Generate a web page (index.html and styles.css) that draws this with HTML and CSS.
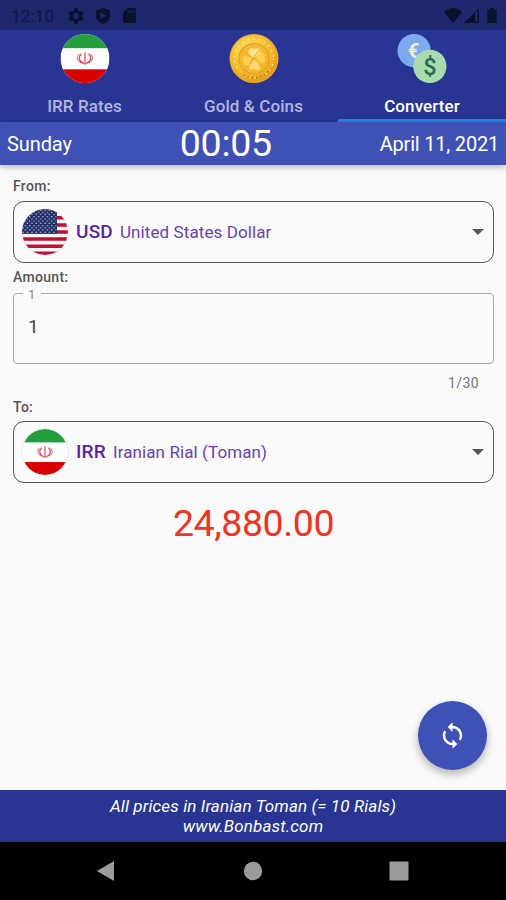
FILE: index.html
```html
<!DOCTYPE html>
<html lang="en">
<head>
<meta charset="utf-8">
<title>Currency Converter</title>
<link rel="stylesheet" href="styles.css">
</head>
<body>
<svg class="defs" width="0" height="0" aria-hidden="true">
  <defs>
    <clipPath id="round"><circle cx="24" cy="24" r="24"/></clipPath>
    <pattern id="stars" width="4.6" height="4.6" patternUnits="userSpaceOnUse">
      <circle cx="1.15" cy="1.15" r=".8" fill="#c9d0e8"/><circle cx="3.45" cy="3.45" r=".8" fill="#c9d0e8"/>
    </pattern>
    <radialGradient id="gold" cx=".4" cy=".35" r=".7"><stop offset="0" stop-color="#ffe36a"/><stop offset=".6" stop-color="#f6bd28"/><stop offset="1" stop-color="#e09a1a"/></radialGradient>
    <symbol id="iran" viewBox="0 0 48 48">
      <g clip-path="url(#round)">
        <path fill="#fff" d="M0 0h48v48H0z"/><path fill="#249f40" d="M0 0h48v14H0z"/><path fill="#da0000" d="M0 34.500h48V48H0z"/>
        <path d="M0 14.500h48M0 34h48" stroke="#fff" stroke-width="1" stroke-dasharray="1.200 1" opacity=".65"/>
        <g fill="none" stroke="#e0454b" stroke-width="1.200">
          <path d="M24 18v12M20.500 19.500c-3.200 3-2.700 7.600 2.500 9.500M27.500 19.500c3.200 3 2.700 7.600-2.500 9.500"/>
          <path d="M18.500 19.500c-3.200 3-2.300 7 1.800 8.800M29.500 19.500c3.200 3 2.300 7-1.800 8.800" stroke-width=".9"/>
        </g>
      </g>
    </symbol>
  </defs>
</svg>
<div class="screen">
  <div class="status">
    <span class="clock">12:10</span>
    <svg class="gear" viewBox="2 2 20 20"><path d="M19.140 12.940c.04-.3.06-.61.06-.94s-.02-.64-.07-.94l2.030-1.580a.49.49 0 0 0 .12-.61l-1.920-3.320a.49.49 0 0 0-.59-.22l-2.390.96a7 7 0 0 0-1.620-.94l-.36-2.540A.48.48 0 0 0 13.920 2.400h-3.840a.48.48 0 0 0-.47.41l-.36 2.540a7 7 0 0 0-1.620.94l-2.390-.96a.49.49 0 0 0-.59.22L2.740 8.870a.49.49 0 0 0 .12.61l2.030 1.580a6.300 6.300 0 0 0 0 1.880l-2.030 1.580a.49.49 0 0 0-.12.61l1.920 3.320c.12.22.37.29.59.22l2.390-.96c.5.38 1.030.7 1.620.94l.36 2.540c.05.24.24.41.48.41h3.840c.24 0 .44-.17.47-.41l.36-2.540a7 7 0 0 0 1.620-.94l2.390.96c.22.08.47 0 .59-.22l1.920-3.320a.49.49 0 0 0-.12-.61zM12 15.600a3.600 3.600 0 1 1 0-7.200 3.600 3.600 0 0 1 0 7.200z"/></svg>
    <svg class="shield" viewBox="0 0 16 16"><path fill-rule="evenodd" d="M8 0l7 2.500v5c0 4-3 7-7 8.500-4-1.500-7-4.500-7-8.500v-5zM5.500 4.300v7l6-3.500z"/></svg>
    <svg class="card" viewBox="0 0 14 16"><path fill-rule="evenodd" d="M5 0h7.500Q14 0 14 1.500v13q0 1.500-1.500 1.500h-11Q0 16 0 14.500V5zM5 2.500V5h1.300V2.500zM8 2.500V5h1.300V2.500zM11 2.500V5h1.300V2.500z"/></svg>
    <div class="signals">
      <svg class="wifi" viewBox="0 0 18 15"><path d="M0 4Q9-4 18 4L9 15z"/></svg>
      <svg class="cell" viewBox="0 0 15 15"><path fill-rule="evenodd" d="M0 15L15 0v15zM11 5.500v8h2.500V3z"/></svg>
      <svg class="battery" viewBox="0 0 10 16"><path d="M3 0h4v1.500h3V16H0V1.500h3z"/></svg>
    </div>
  </div>
  <nav class="tabs">
    <div class="tab"><svg class="tab-icon"><use href="#iran"/></svg><span>IRR Rates</span></div>
    <div class="tab">
      <svg class="tab-icon" viewBox="0 0 48 48">
        <circle cx="24" cy="24" r="24" fill="#e8a930"/><circle cx="24" cy="24" r="23" fill="url(#gold)"/>
        <circle cx="24" cy="24" r="19" fill="none" stroke="#ffe9a0" stroke-width="1.400" stroke-dasharray="1.500 4"/>
        <path d="M14 40A19 19 0 0 0 40 34" fill="none" stroke="#b87512" stroke-width="1.500" stroke-dasharray="1.500 2.600"/>
        <circle cx="24" cy="24" r="14.800" fill="#f3b730" stroke="#e0a024" stroke-width="1"/>
        <g fill="#ffd052"><path d="M23 23q-8-6-2-9 2-1 3 1 3-2 5 0 4 4-5 8z" fill="#ffe48e"/><path d="M22 24q-7-5-9-1-1 3 1 3-1 4 2 5 5 0 6-7z"/><path d="M26 23q4-7 8-4 2 2 0 4 3 3 0 5-4 2-8-5z"/><path d="M24 25q-6 6-4 9 2 2 4 0 3 3 6 0 1-4-6-9z" fill="#ffda70"/></g>
        <path d="M29 16q-5 5-9 14" fill="none" stroke="#d39a28" stroke-width=".9"/>
      </svg><span>Gold &amp; Coins</span></div>
    <div class="tab active">
      <svg class="tab-icon" viewBox="0 0 48 48">
        <circle cx="16.300" cy="16.300" r="16.300" fill="#7baaf0"/><text class="euro" x="15.800" y="23.500">€</text>
        <circle cx="31.700" cy="31.700" r="16.300" fill="#a8dbae"/><text class="dollar" x="31.700" y="40">$</text>
      </svg><span>Converter</span></div>
  </nav>
  <header class="datebar"><span class="day">Sunday</span><span class="time">00:05</span><span class="date">April 11, 2021</span></header>
  <main class="form">
    <div class="label">From:</div>
    <div class="select">
      <svg class="flag" viewBox="0 0 48 48"><g clip-path="url(#round)">
        <path fill="#f8f7f8" d="M0 0h48v48H0z"/>
        <path stroke="#bd1235" stroke-width="3.690" d="M0 1.850h48M0 9.230h48M0 16.610h48M0 24h48M0 31.380h48M0 38.770h48M0 46.150h48"/>
        <path fill="#202b66" d="M0 0h36.500v25.800H0z"/><path fill="url(#stars)" d="M0 0h36v25.500H0z"/></g></svg>
      <span class="code">USD</span><span class="name usd">United States Dollar</span><i class="arrow"></i>
    </div>
    <div class="label amount-label">Amount:</div>
    <fieldset class="amount"><legend>1</legend><span>1</span></fieldset>
    <div class="counter">1/30</div>
    <div class="label">To:</div>
    <div class="select">
      <svg class="flag"><use href="#iran"/></svg>
      <span class="code">IRR</span><span class="name irr">Iranian Rial (Toman)</span><i class="arrow"></i>
    </div>
    <div class="result">24,880.00</div>
    <div class="fab"><svg viewBox="0 0 24 24"><path d="M12 4V1L8 5l4 4V6c3.310 0 6 2.690 6 6 0 1.010-.25 1.970-.7 2.800l1.460 1.460A7.930 7.930 0 0 0 20 12c0-4.420-3.580-8-8-8zm0 14c-3.310 0-6-2.690-6-6 0-1.010.25-1.970.7-2.800L5.240 7.740A7.930 7.930 0 0 0 4 12c0 4.420 3.580 8 8 8v3l4-4-4-4z"/></svg></div>
  </main>
  <footer class="note"><div class="line-one">All prices in Iranian Toman (= 10 Rials)</div><div class="line-two">www.Bonbast.com</div></footer>
  <div class="navbar">
    <svg viewBox="0 0 20 22"><path d="M18 1v20L1 11z"/></svg>
    <svg viewBox="0 0 20 22"><circle cx="10" cy="11" r="9.200"/></svg>
    <svg viewBox="0 0 20 22"><rect x=".5" y="1.500" width="19" height="19" rx="1"/></svg>
  </div>
</div>
</body>
</html>
```
FILE: styles.css
```css
* { box-sizing: border-box; }
body { margin: 0; font-family: Roboto, "Liberation Sans", sans-serif; background: #fafafa; }
.defs { position: absolute; }
svg { display: block; flex: none; }
.screen { width: 506px; height: 900px; display: flex; flex-direction: column; overflow: hidden; }

.status { height: 30px; flex: none; background: #1f286d; display: flex; align-items: center; padding: 1px 9px 0 11px; color: #10163f; fill: #0b102d; }
.clock { font-size: 17px; width: 57px; letter-spacing: .2px; }
.gear { width: 16px; height: 16px; }
.shield { width: 16px; height: 16px; margin-left: 11px; }
.card { width: 13px; height: 15px; margin-left: 12px; }
.signals { display: flex; align-items: center; margin-left: auto; }
.wifi { width: 18px; height: 15px; }
.cell { width: 15px; height: 15px; margin-left: 2px; }
.battery { width: 10px; height: 15px; margin: 0 0 0 8px; }

.tabs { height: 92px; flex: none; display: grid; grid-template-columns: 169px 169px 168px; background: #283593; }
.tab { display: flex; flex-direction: column; align-items: center; padding-top: 4px; font-size: 17px; font-weight: 500; line-height: 20px; color: #b0b6e0; border-bottom: 3px solid transparent; }
.tab span { margin-top: 13px; letter-spacing: .1px; }
.tab.active { color: #fff; border-color: #1e88e5; }
.tab-icon { width: 50px; height: 49px; }
.euro, .dollar { font-family: Roboto, sans-serif; text-anchor: middle; }
.euro { font-size: 20px; font-weight: 700; fill: #f5eac8; }
.dollar { font-size: 23px; font-weight: 500; fill: #276b52; }

.datebar { height: 43px; flex: none; display: flex; justify-content: space-between; align-items: center; padding: 0 7px; background: #3f51b5; color: #fff; font-size: 20px; box-shadow: 0 2px 6px rgba(0,0,0,.28); z-index: 1; }
.day { letter-spacing: -.1px; }
.time { font-size: 37.500px; line-height: 43px; letter-spacing: -.3px; }
.date { letter-spacing: -.2px; }

.form { flex: 1; position: relative; padding: 12px 12px 0 13px; }
.label { font-size: 14px; line-height: 18px; font-weight: 500; color: #555; letter-spacing: .3px; }
.amount-label { margin-top: -1px; }
.select { height: 62px; margin: 6px 0; border: 1px solid #555; border-radius: 11px; display: flex; align-items: center; padding: 0 9px 1px 8px; }
.flag { width: 46px; height: 46px; border-radius: 50%; box-shadow: 0 0 1px #999; }
.code { font-size: 19px; font-weight: 500; color: #5b1fa8; margin-left: 8px; letter-spacing: .2px; }
.name { font-size: 17px; color: #6a3fb8; margin-left: 7px; letter-spacing: .1px; }
.arrow { margin-left: auto; border: 6px solid transparent; border-top-color: #555; border-bottom: 0; }
.amount { height: 79px; margin: -1px 0 0; border: 1px solid #aaa; border-radius: 4px; padding: 0 0 0 14px; font-size: 19px; color: #444; min-width: 0; }
.amount legend { font-size: 13px; line-height: 12px; height: 16px; padding: 4px 6px 0 5px; margin-left: -5px; color: #888; }
.amount span { display: block; line-height: 22px; margin-top: 15px; }
.counter { height: 34px; padding: 10px 15px 0 0; text-align: right; font-size: 14px; line-height: 18px; color: #777; letter-spacing: .4px; }
.counter + .label { margin-bottom: -1px; }
.counter + .label + .select { margin-top: 6px; }
.result { margin-top: 17px; line-height: 46px; text-align: center; font-size: 37.500px; color: #ee3524; letter-spacing: -.4px; }
.fab { position: absolute; right: 19px; bottom: 20px; width: 69px; height: 69px; border-radius: 50%; background: #3f51b5; display: flex; align-items: center; justify-content: center; box-shadow: 0 4px 8px rgba(0,0,0,.3); }
.fab svg { width: 29px; height: 29px; fill: #fff; }

.note { height: 52px; flex: none; background: #283593; color: #fff; text-align: center; font-size: 17px; font-style: italic; line-height: 20px; padding-top: 6px; }
.line-one { letter-spacing: .13px; }
.line-two { letter-spacing: .15px; }
.navbar { height: 58px; flex: none; background: #000; fill: #9b9b9b; display: flex; justify-content: space-between; padding: 18px 97px 0 96px; }
.navbar svg { width: 20px; height: 22px; }
```
